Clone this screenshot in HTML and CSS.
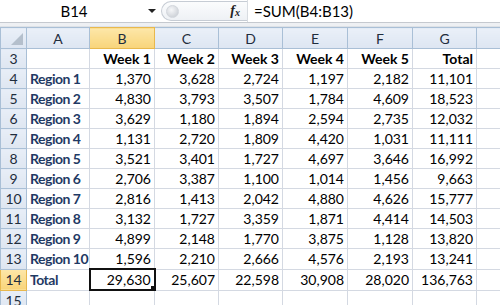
FILE: index.html
```html
<!DOCTYPE html>
<html lang="en">
<head>
  <meta charset="UTF-8">
  <title>Weekly totals</title>
  <link rel="stylesheet" href="styles.css">
</head>
<body>
  <div class="formula-bar">
    <div class="name-box">
      <span class="name-text">B14</span>
      <span class="name-arrow"></span>
    </div>
    <div class="fx-pill">
      <span class="pill-dot"></span>
      <span class="fx">f<sub>x</sub></span>
    </div>
    <div class="formula-input">=SUM(B4:B13)</div>
  </div>
  <div class="bar-gap"></div>

  <div class="sheet-wrap">
    <table class="sheet">
      <colgroup>
        <col class="c-row">
        <col class="c-a">
        <col class="c-b">
        <col class="c-c">
        <col class="c-d">
        <col class="c-e">
        <col class="c-f">
        <col class="c-g">
        <col class="c-h">
      </colgroup>
      <thead>
        <tr>
          <th class="corner"><span class="corner-tri"></span></th>
          <th>A</th>
          <th class="sel">B</th>
          <th>C</th>
          <th>D</th>
          <th>E</th>
          <th>F</th>
          <th>G</th>
          <th></th>
        </tr>
      </thead>
      <tbody id="sheetBody"></tbody>
    </table>
  </div>

  <script>
    const rows = [
      ["Region 1", 1370, 3628, 2724, 1197, 2182, 11101],
      ["Region 2", 4830, 3793, 3507, 1784, 4609, 18523],
      ["Region 3", 3629, 1180, 1894, 2594, 2735, 12032],
      ["Region 4", 1131, 2720, 1809, 4420, 1031, 11111],
      ["Region 5", 3521, 3401, 1727, 4697, 3646, 16992],
      ["Region 6", 2706, 3387, 1100, 1014, 1456, 9663],
      ["Region 7", 2816, 1413, 2042, 4880, 4626, 15777],
      ["Region 8", 3132, 1727, 3359, 1871, 4414, 14503],
      ["Region 9", 4899, 2148, 1770, 3875, 1128, 13820],
      ["Region 10", 1596, 2210, 2666, 4576, 2193, 13241],
    ];
    const totals = ["Total", 29630, 25607, 22598, 30908, 28020, 136763];

    const body = document.getElementById("sheetBody");
    let html = `<tr><th class="rh">3</th><td></td>`;
    ["Week 1", "Week 2", "Week 3", "Week 4", "Week 5", "Total"].forEach(h => {
      html += `<td class="head">${h}</td>`;
    });
    html += `<td></td></tr>`;

    rows.forEach((r, i) => {
      html += `<tr><th class="rh">${i + 4}</th><td class="label">${r[0]}</td>`;
      r.slice(1).forEach(n => html += `<td class="num">${n.toLocaleString("en-US")}</td>`);
      html += `<td></td></tr>`;
    });

    html += `<tr><th class="rh sel">14</th><td class="label">${totals[0]}</td>`;
    totals.slice(1).forEach((n, i) => {
      const cls = i === 0 ? "num active" : "num";
      const handle = i === 0 ? `<span class="fill-handle"></span>` : "";
      html += `<td class="${cls}">${n.toLocaleString("en-US")}${handle}</td>`;
    });
    html += `<td></td></tr>`;

    html += `<tr><th class="rh">15</th><td></td><td></td><td></td><td></td><td></td><td></td><td></td><td></td></tr>`;
    body.innerHTML = html;
  </script>
</body>
</html>
```

FILE: styles.css
```css
body {
  margin: 0;
  font-family: Lato, "Open Sans", Arial, sans-serif;
  background: #fff;
  width: 500px;
  height: 305px;
  overflow: hidden;
}
.formula-bar {
  display: flex;
  align-items: center;
  height: 22px;
  border-bottom: 1px solid #c5c9cf;
  background: #fff;
}
.name-box {
  width: 161px;
  display: flex;
  align-items: center;
  font-size: 15px;
  color: #000;
}
.name-text {
  flex: 1;
  text-align: center;
}
.name-arrow {
  width: 0;
  height: 0;
  border-left: 4px solid transparent;
  border-right: 4px solid transparent;
  border-top: 4px solid #222;
  margin-right: 5px;
}
.fx-pill {
  width: 86px;
  height: 20px;
  box-sizing: border-box;
  border: 1px solid #c6ccd4;
  border-right: none;
  border-radius: 11px 0 0 11px;
  background: linear-gradient(#fbfcfd, #eef1f5);
  display: flex;
  align-items: center;
  justify-content: space-between;
  padding: 0 7px 0 4px;
}
.pill-dot {
  width: 11px;
  height: 11px;
  border-radius: 50%;
  background: radial-gradient(circle at 40% 35%, #f6f7f9, #c3c8cf);
  border: 1px solid #d2d6dc;
}
.fx {
  font-family: "Liberation Serif", serif;
  font-style: italic;
  font-weight: bold;
  font-size: 14px;
  color: #222;
}
.fx sub {
  font-size: 10px;
  vertical-align: -1px;
}
.formula-input {
  flex: 1;
  height: 22px;
  line-height: 22px;
  border-left: 1px solid #d8dce1;
  padding-left: 6px;
  font-size: 15px;
  color: #000;
}
.bar-gap {
  height: 3px;
  background: #eef0f3;
  border-bottom: 1px solid #dde1e6;
}
.sheet-wrap {
  width: 500px;
  overflow: hidden;
}
.sheet {
  border-collapse: collapse;
  table-layout: fixed;
  width: 520px;
  font-size: 14px;
}
.c-row { width: 26px; }
.c-a { width: 63px; }
.c-b { width: 65px; }
.c-c { width: 64px; }
.c-d { width: 64px; }
.c-e { width: 65px; }
.c-f { width: 65px; }
.c-g { width: 64px; }
.c-h { width: 44px; }
.sheet th,
.sheet td {
  height: 19px;
  padding: 0 3px;
  white-space: nowrap;
  overflow: hidden;
}
.sheet td {
  border: 1px solid #d4d9e2;
  color: #000;
}
.sheet thead th {
  height: 20px;
  background: linear-gradient(#eaf0f8, #dde6f2);
  border: 1px solid #a9bfd6;
  font-weight: normal;
  color: #1f2d3d;
  text-align: center;
}
.sheet th.rh {
  background: linear-gradient(#e8eef7, #dee6f1);
  border: 1px solid #a9bfd6;
  font-weight: normal;
  color: #1f2d3d;
  text-align: center;
  padding: 0;
}
.sheet th.sel {
  background: linear-gradient(#fde7a8, #f8d47a);
  border-color: #e8b84d;
}
.corner {
  position: relative;
}
.corner-tri {
  position: absolute;
  right: 3px;
  bottom: 3px;
  width: 0;
  height: 0;
  border-left: 12px solid transparent;
  border-bottom: 12px solid #b4bfcc;
}
.head {
  font-weight: bold;
  color: #1f3a64;
  text-align: right;
}
.sheet td.label {
  font-weight: bold;
  color: #1f3a64;
  letter-spacing: -0.5px;
  padding: 0 0 0 3px;
}
.num {
  text-align: right;
}
.sheet td.active {
  position: relative;
  border: 2px solid #111;
}
.fill-handle {
  position: absolute;
  right: -3px;
  bottom: -3px;
  width: 5px;
  height: 5px;
  background: #111;
  border: 1px solid #fff;
}
```
